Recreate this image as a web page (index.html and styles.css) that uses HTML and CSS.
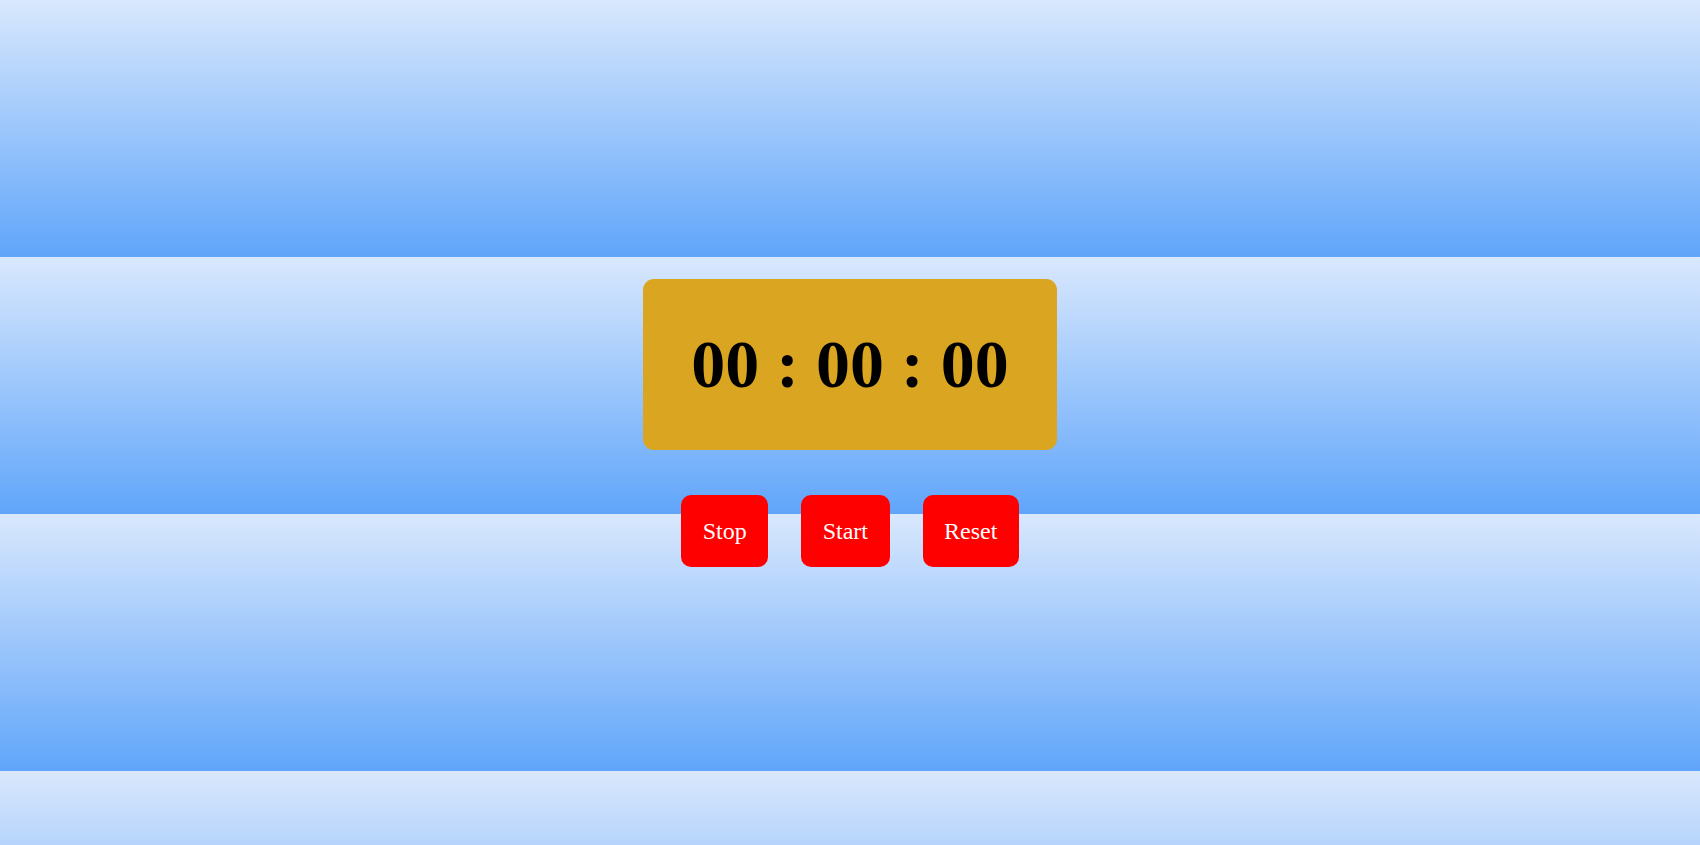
FILE: index.html
```html
<!DOCTYPE html>
<html lang="en">
<head>
<meta charset="utf-8">
<title>Stopwatch</title>
<link rel="stylesheet" href="styles.css">
</head>
<body>
  <div class="display">00 : 00 : 00</div>
  <div class="controls">
    <button class="btn">Stop</button>
    <button class="btn">Start</button>
    <button class="btn">Reset</button>
  </div>
</body>
</html>
```
FILE: styles.css
```css
html {
  background: linear-gradient(to bottom, #d9e8fd, #60a5fa);
  background-size: 100% 257px;
  background-repeat: repeat;
}
body {
  margin: 0;
  height: 100vh;
  display: flex;
  flex-direction: column;
  align-items: center;
  justify-content: center;
  gap: 45px;
  font-family: "Liberation Serif", "Times New Roman", serif;
}
.display {
  background: #daa520;
  border-radius: 11px;
  padding: 46px 48px;
  font-size: 68px;
  line-height: 79px;
  font-weight: bold;
  color: #000;
  white-space: nowrap;
}
.controls {
  display: flex;
  gap: 33px;
}
.btn {
  background: #ff0000;
  color: #fff;
  border: none;
  border-radius: 10px;
  padding: 22px 21.5px;
  font-family: "Liberation Serif", "Times New Roman", serif;
  font-size: 24px;
  line-height: 28px;
  cursor: pointer;
}
```
